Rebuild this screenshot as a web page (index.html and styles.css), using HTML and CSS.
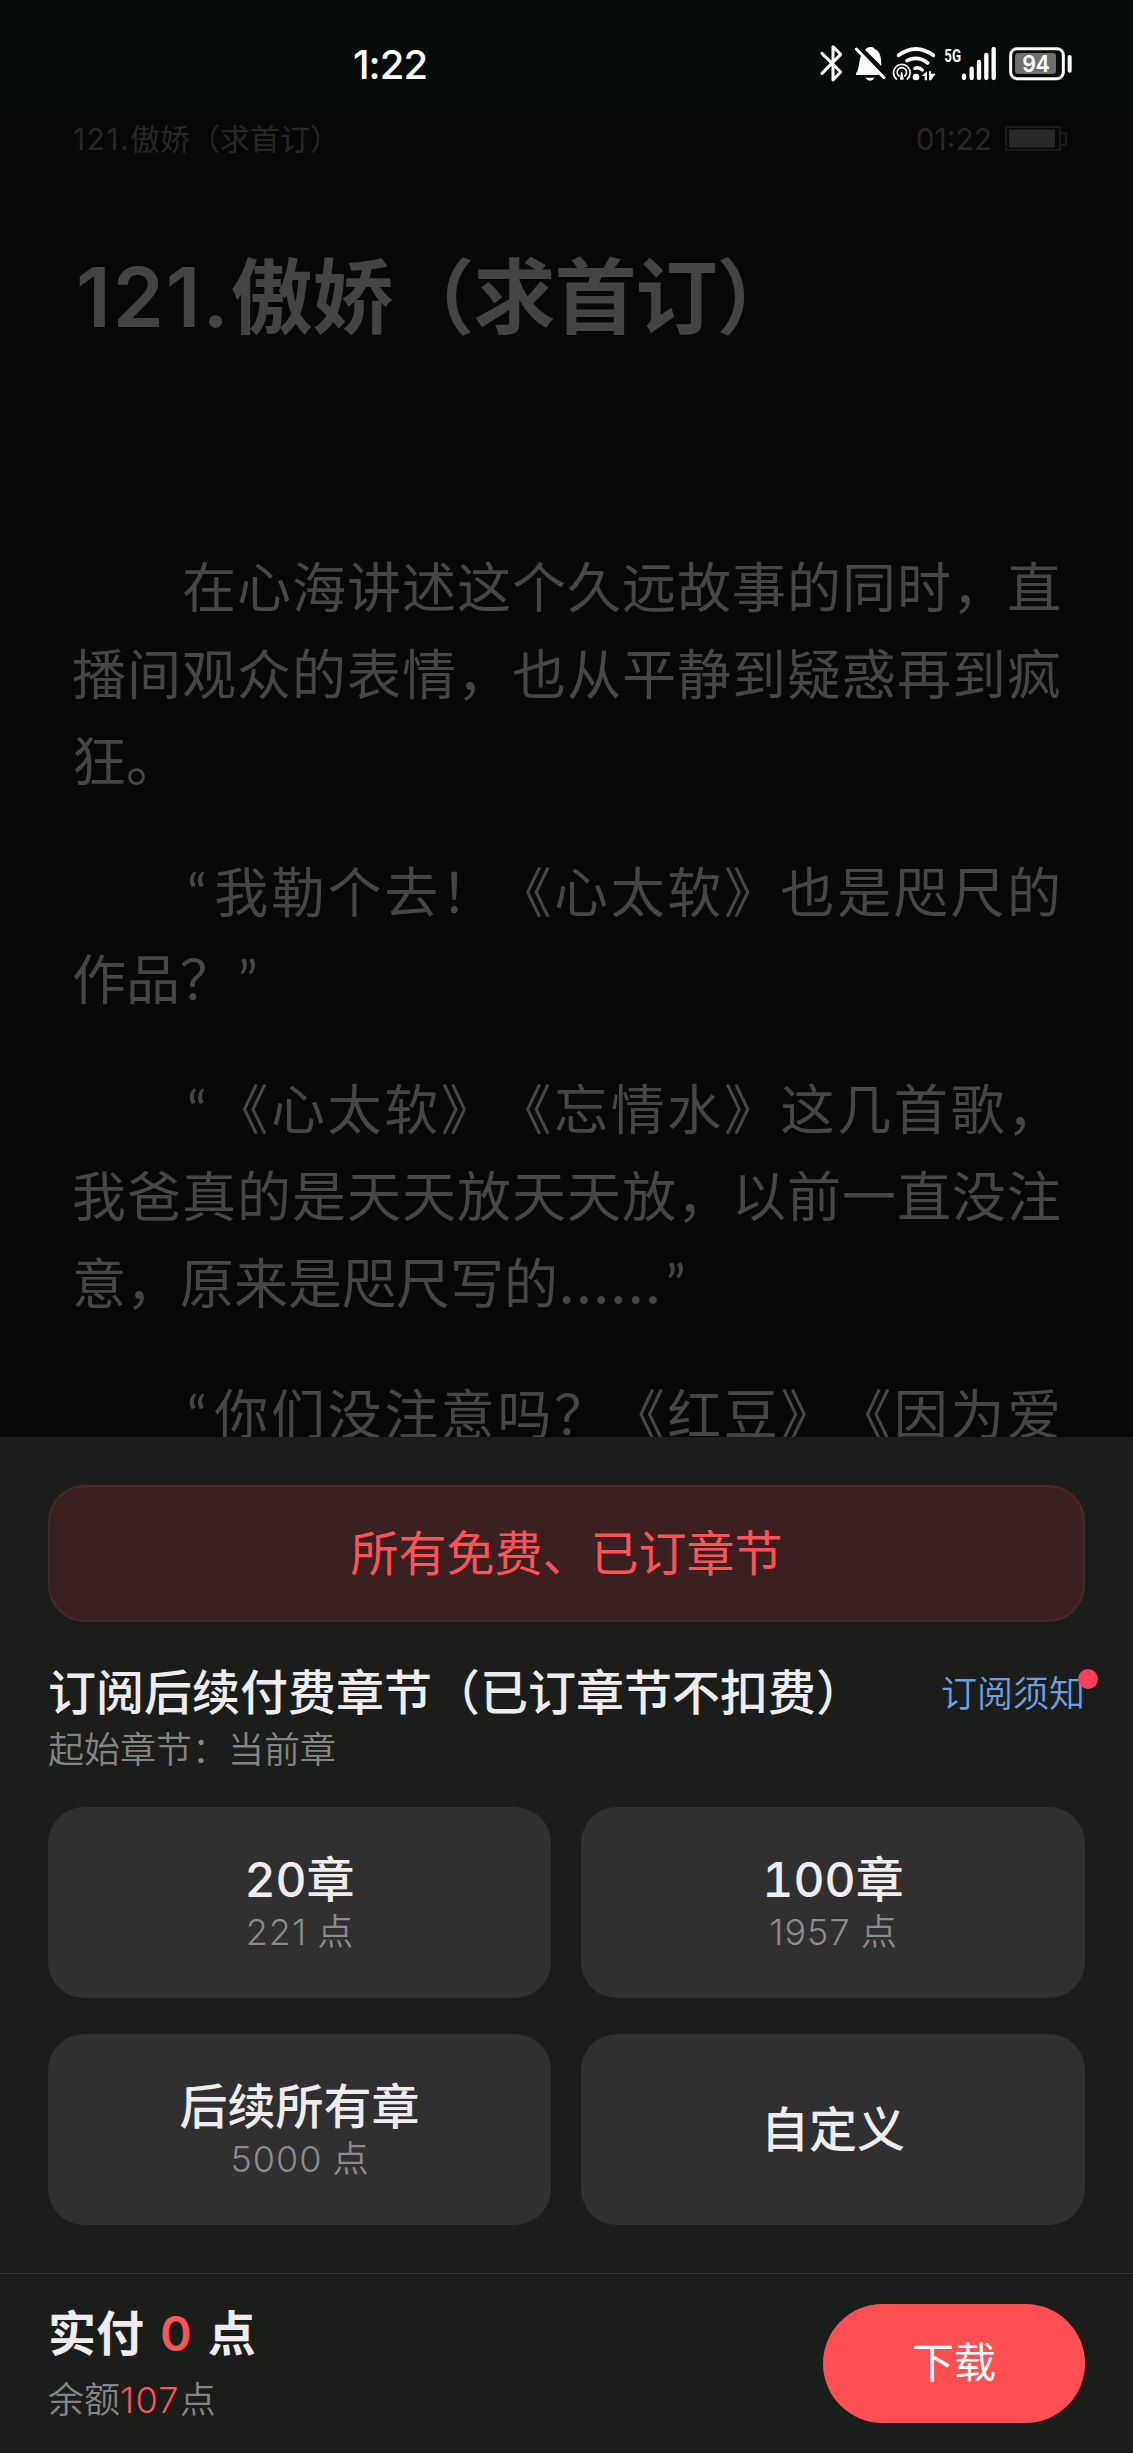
FILE: index.html
```html
<!DOCTYPE html>
<html lang="zh-CN">
<head>
<meta charset="utf-8">
<title>121.傲娇（求首订）</title>
<link rel="stylesheet" href="styles.css">
</head>
<body>
<div class="screen">
  <header class="status">
    <time class="clock">1:22</time>
    <svg class="status-icons" viewBox="45 30 780 135" fill="none" stroke="#fff" stroke-linecap="round" stroke-linejoin="round">
      <path d="M66 70L122 126L99 150V50L122 73L66 130" stroke-width="9"/>
      <path d="M184 76C177 88 179 108 172 124Q166 130 168 135H238ZM196 60C200 49 220 49 224 57C240 64 244 80 244 108Z" fill="#fff" stroke="none"/>
      <path d="M196 143H224Q218 152 210 152T196 143Z" fill="#fff" stroke="none"/>
      <path d="M169 57L252 143" stroke-width="9"/>
      <path d="M296 76Q347 38 400 76M321 92Q353 76 383 99" stroke-width="11"/>
      <path d="M345 115Q356 110 367 120" stroke-width="10"/>
      <circle cx="348" cy="141" r="10" fill="#fff" stroke="none"/>
      <path d="M289 147A25 25 0 1 1 322 147M297 138A14 14 0 1 1 314 138" stroke-width="5"/>
      <path d="M302 147L305 128L309 147Z" fill="#fff" stroke-width="4"/>
      <path d="M365 138L381 124V151H374V138ZM387 124H393V131H407L393 151H387Z" fill="#fff" stroke="none"/>
      <text class="net" transform="translate(433 96) scale(.7 1)">5G</text>
      <path d="M492 137V144M515 116V144M537 96V144M559 75V144M581 57V144" stroke-width="13"/>
      <rect x="645" y="69" width="123" height="63" rx="9" fill="#6f706f" stroke="none"/>
      <rect x="632" y="56" width="158" height="90" rx="19" stroke-width="9"/>
      <path d="M809 81V122" stroke-width="12"/>
      <text class="charge" transform="translate(707 125) scale(.93 1)" text-anchor="middle">94</text>
    </svg>
  </header>

  <main class="reader">
    <div class="running-head">
      <span><span class="num">121.</span>傲娇（求首订）</span>
      <span class="running-time">01:22
        <svg class="mini-battery" viewBox="0 0 63 26" fill="none" stroke="#1f201f" stroke-width="1.6">
          <rect x="1" y="1" width="54" height="23"/>
          <path d="M55 7H61V19H55"/>
          <rect x="4" y="3.5" width="46" height="18" fill="#282828" stroke="none"/>
        </svg>
      </span>
    </div>
    <h1 class="title"><span class="num">121.</span>傲娇（求首订）</h1>
    <article class="text">
      <p><span class="line indent">在心海讲述这个久远故事的同时，直</span><span class="line">播间观众的表情，也从平静到疑惑再到疯</span><span class="line last">狂。</span></p>
      <p><span class="line indent"><q class="open">“</q>我勒个去！《心太软》也是咫尺的</span><span class="line last">作品？<q class="close">”</q></span></p>
      <p><span class="line indent"><q class="open">“</q>《心太软》《忘情水》这几首歌，</span><span class="line">我爸真的是天天放天天放，以前一直没注</span><span class="line last">意，原来是咫尺写的<span class="dots">……</span><q class="close">”</q></span></p>
      <p><span class="line indent"><q class="open">“</q>你们没注意吗？《红豆》《因为爱</span></p>
    </article>
  </main>

  <section class="sheet">
    <button class="free">所有免费、已订章节</button>
    <div class="heading">
      <h2>订阅后续付费章节（已订章节不扣费）</h2>
      <a class="notice">订阅须知</a>
    </div>
    <p class="start">起始章节：当前章</p>
    <div class="options">
      <button class="option"><b><i>20</i>章</b><small><i>221</i> 点</small></button>
      <button class="option"><b><i>100</i>章</b><small><i>1957</i> 点</small></button>
      <button class="option"><b>后续所有章</b><small><i>5000</i> 点</small></button>
      <button class="option"><b>自定义</b></button>
    </div>
    <footer class="pay">
      <div>
        <p class="total">实付<em>0</em>点</p>
        <p class="balance">余额<em>107</em>点</p>
      </div>
      <button class="download">下载</button>
    </footer>
  </section>
</div>
</body>
</html>
```
FILE: styles.css
```css
* { box-sizing: border-box; margin: 0; padding: 0; }
body {
  background: #080808;
  font-family: Inter, "Noto Sans CJK SC", sans-serif;
  text-spacing-trim: space-all;
}
button { border: 0; font-family: inherit; text-spacing-trim: inherit; }
i, em { font-style: normal; }
q { quotes: none; }
.screen { width: 1133px; height: 2453px; display: flex; flex-direction: column; overflow: hidden; }

.status {
  height: 104px; flex: none; background: #070c08; color: #fff;
  display: flex; justify-content: space-between; align-items: flex-start;
  padding: 40px 58px 0 353px;
}
.clock { font-size: 40px; line-height: 50px; font-weight: 550; letter-spacing: -1px; }
.status-icons { width: 260px; height: 45px; }
.net { font: 700 57px Roboto, sans-serif; fill: #fff; stroke: none; }
.charge { font: 600 69px Inter, sans-serif; fill: #fff; stroke: none; letter-spacing: -2px; }

.reader { height: 1333px; flex: none; overflow: hidden; padding: 0 72px; color: #464745; }
.running-head {
  display: flex; justify-content: space-between; height: 70px; line-height: 70px;
  font-size: 30px; color: #272727; margin-right: -7px; padding-left: 1px;
}
.running-head .num { letter-spacing: 1.4px; }
.running-time { display: flex; align-items: center; gap: 13px; }
.mini-battery { width: 63px; height: 26px; }
.title {
  font-size: 82px; line-height: 120px; font-weight: 600; letter-spacing: -1px;
  margin-top: 64px; padding-left: 4px; white-space: nowrap; color: #444543;
}
.title .num { letter-spacing: 2px; }
.text { margin-top: 187px; font-size: 54px; line-height: 87px; }
.text p { margin-bottom: 43.5px; }
.line { display: block; white-space: nowrap; text-align: justify; text-align-last: justify; }
.line.indent { padding-left: 110px; }
.line.last { text-align-last: left; }
.open, .close { font-family: Lato, sans-serif; line-height: 1; }
.open { margin: 0 5px 0 5px; }
.close { margin-left: 4px; }
.dots { font-size: 60px; line-height: 1; }

.sheet { flex: 1; background: #1b1d1a; color: #eeecee; padding-top: 48px; }
.free {
  display: block; width: 1037px; height: 137px; margin: 0 48px; padding-bottom: 8px;
  border: 2px solid #4c2729; border-radius: 37px; background: #3b2021;
  color: #ff5357; font-size: 48px;
}
.heading { display: flex; justify-content: space-between; align-items: center; height: 72px; margin: 35px 48px 0; }
.heading h2 { font-size: 48px; line-height: 72px; font-weight: 500; white-space: nowrap; }
.notice { position: relative; padding-bottom: 5px; font-size: 36px; font-weight: 350; color: #6f9fe0; }
.notice::after {
  content: ""; position: absolute; right: -13px; top: 4px;
  width: 20px; height: 20px; border-radius: 50%; background: #ff405c;
}
.start { margin: -1px 48px 0; font-size: 36px; line-height: 44px; font-weight: 350; color: #858684; }
.options { display: grid; grid-template-columns: 503px 504px; grid-auto-rows: 191px; gap: 36px 30px; margin: 35px 48px 0; }
.option {
  display: flex; flex-direction: column; align-items: center; justify-content: center;
  border-radius: 36px; background: #303030; color: #eeecee;
}
.option b { font-size: 48px; line-height: 58px; font-weight: 500; font-variant-numeric: tabular-nums; }
.option small { font-size: 36px; line-height: 46px; font-weight: 350; color: #8b8b8b; }
.option small i { font-weight: 300; letter-spacing: 1px; }
.pay {
  display: flex; justify-content: space-between; margin-top: 48px;
  border-top: 1px solid #343634; padding: 30px 48px 0;
}
.total { font-size: 48px; line-height: 60px; font-weight: 600; }
.total em { color: #ff5357; margin: 0 16px; }
.balance { margin-top: 11px; font-size: 36px; line-height: 50px; font-weight: 350; color: #858684; }
.balance em { color: #ff5357; letter-spacing: 1.3px; font-weight: 300; }
.download {
  width: 262px; height: 119px; padding-bottom: 8px; border-radius: 60px;
  background: #ff4f52; color: #fff; font-size: 42px;
}
```
